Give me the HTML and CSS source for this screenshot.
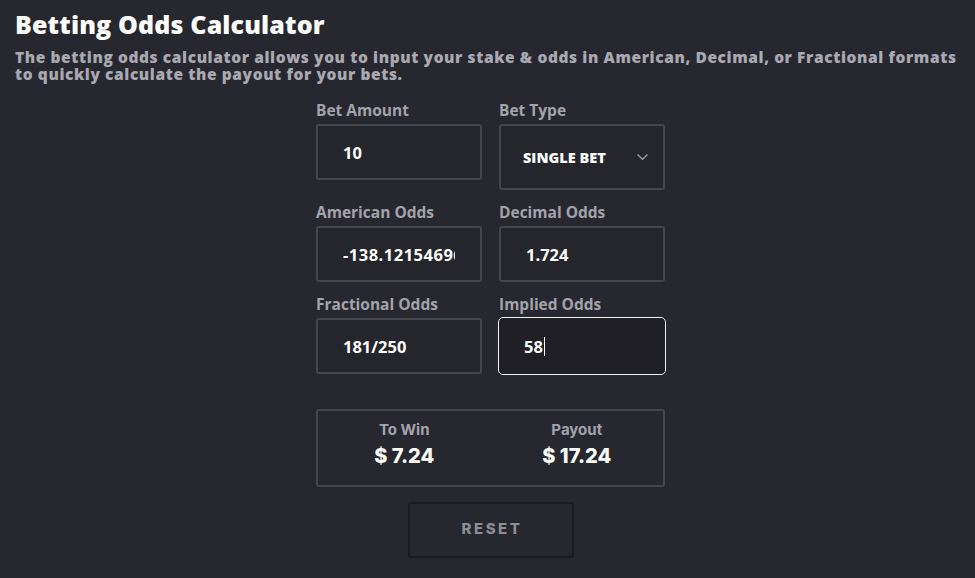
FILE: index.html
```html
<!DOCTYPE html>
<html>
<head>
<meta charset="utf-8">
<link rel="stylesheet" href="styles.css">
</head>
<body>
<header class="intro">
  <h1 class="title">Betting Odds Calculator</h1>
  <p class="desc">The betting odds calculator allows you to input your stake &amp; odds in American, Decimal, or Fractional formats to quickly calculate the payout for your bets.</p>
</header>
<main class="calc">
  <div class="grid">
    <div class="field">
      <label class="label">Bet Amount</label>
      <div class="input">10</div>
    </div>
    <div class="field">
      <label class="label">Bet Type</label>
      <div class="input select"><span>SINGLE BET</span>
        <svg class="chev" width="13" height="8" viewBox="0 0 13 8"><path d="M1.5 1.5 L6.5 6.3 L11.5 1.5" fill="none" stroke="#9a9aa2" stroke-width="1.4"/></svg>
      </div>
    </div>
    <div class="field">
      <label class="label">American Odds</label>
      <div class="input clip"><span class="clip-text">-138.1215469613</span></div>
    </div>
    <div class="field">
      <label class="label">Decimal Odds</label>
      <div class="input">1.724</div>
    </div>
    <div class="field">
      <label class="label">Fractional Odds</label>
      <div class="input">181/250</div>
    </div>
    <div class="field">
      <label class="label">Implied Odds</label>
      <div class="input focus">58<span class="caret"></span></div>
    </div>
  </div>
  <div class="result">
    <div class="res-col">
      <div class="res-label">To Win</div>
      <div class="res-val">$ 7.24</div>
    </div>
    <div class="res-col">
      <div class="res-label">Payout</div>
      <div class="res-val">$ 17.24</div>
    </div>
  </div>
  <div class="actions">
    <button class="reset">RESET</button>
  </div>
</main>
</body>
</html>
```
FILE: styles.css
```css
html, body {
  margin: 0;
  padding: 0;
  background: #27272f;
  height: 100%;
}
body {
  font-family: "Open Sans", "Noto Sans", sans-serif;
  color: #fff;
}
.intro {
  padding: 9px 15px 0 15px;
}
.title {
  margin: 0;
  font-family: "Open Sans", Inter, sans-serif;
  font-weight: 800;
  font-size: 25px;
  line-height: 30px;
  letter-spacing: 0.15px;
  color: #ffffff;
}
.desc {
  margin: 10px 0 0 0;
  font-family: "Open Sans", Inter, sans-serif;
  font-weight: 800;
  font-size: 15.5px;
  line-height: 17px;
  letter-spacing: 0.6px;
  color: #a9a9b1;
  max-width: 945px;
}
.calc {
  width: 349px;
  margin: 17px 0 0 316px;
}
.grid {
  display: grid;
  grid-template-columns: 166px 166px;
  column-gap: 17px;
  row-gap: 12px;
  align-items: start;
}
.field {
  display: flex;
  flex-direction: column;
}
.label {
  font-family: "Open Sans", sans-serif;
  font-weight: 700;
  font-size: 15.5px;
  line-height: 20px;
  color: #a3a3ab;
  margin-bottom: 4px;
}
.input {
  box-sizing: border-box;
  height: 56px;
  border: 2px solid #46464e;
  border-radius: 3px;
  background: #25252c;
  padding: 0 0 0 25px;
  display: flex;
  align-items: center;
  font-family: "Open Sans", sans-serif;
  font-weight: 700;
  font-size: 16.5px;
  color: #ffffff;
  white-space: nowrap;
  overflow: hidden;
}
.select {
  height: 66px;
  padding-left: 22px;
  padding-right: 14px;
  justify-content: space-between;
  font-family: "Open Sans", sans-serif;
  font-weight: 800;
  font-size: 14.5px;
  letter-spacing: 0;
}
.clip {
  padding-right: 25px;
}
.clip-text {
  flex: 1;
  min-width: 0;
  overflow: hidden;
  letter-spacing: 0.5px;
}
.focus {
  height: 58px;
  border-color: #f2f2f2;
  border-width: 1.5px;
  border-radius: 5px;
  background: #1f1f25;
  margin-left: -1px;
  margin-right: -1px;
  margin-top: -1px;
}
.caret {
  display: inline-block;
  width: 1px;
  height: 19px;
  background: #ffffff;
  margin-left: 1px;
}
.result {
  box-sizing: border-box;
  margin-top: 34px;
  height: 78px;
  border: 2px solid #46464e;
  border-radius: 3px;
  display: grid;
  grid-template-columns: 1fr 1fr;
  align-items: center;
}
.res-col {
  text-align: center;
  font-family: Inter, "Open Sans", sans-serif;
}
.res-label {
  font-weight: 700;
  font-size: 15px;
  line-height: 20px;
  color: #a3a3ab;
  margin-top: -6px;
}
.res-val {
  font-weight: 800;
  font-size: 20px;
  line-height: 28px;
  color: #ffffff;
  margin-top: 2px;
}
.actions {
  display: flex;
  justify-content: center;
  margin-top: 15px;
}
.reset {
  box-sizing: border-box;
  width: 166px;
  height: 56px;
  background: #27272f;
  border: 2px solid #1b1b21;
  border-radius: 3px;
  font-family: Inter, "Open Sans", sans-serif;
  font-weight: 800;
  font-size: 15px;
  letter-spacing: 2.5px;
  color: #8d8d95;
  padding: 0 0 4px 3px;
}
```
